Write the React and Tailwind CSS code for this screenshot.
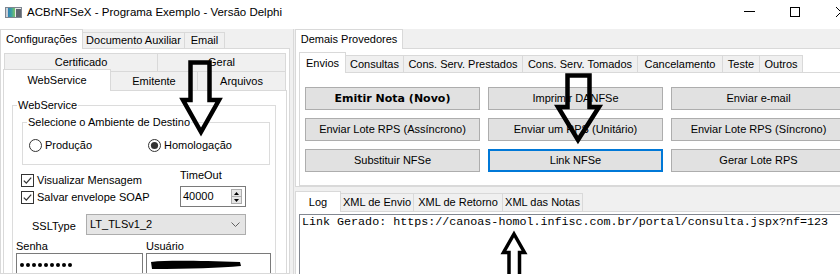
import React from "react";

function Check() {
  return (
    <svg width="13" height="13" viewBox="0 0 13 13" className="shrink-0">
      <rect x="0.5" y="0.5" width="12" height="12" fill="#fff" stroke="#333" />
      <path d="M2.8 6.6 L5.3 9.1 L10.2 3.6" fill="none" stroke="#333" strokeWidth="1.3" />
    </svg>
  );
}

function Radio({ on }) {
  return (
    <svg width="13" height="13" viewBox="0 0 13 13" className="shrink-0">
      <circle cx="6.5" cy="6.5" r="6" fill="#fff" stroke="#333" />
      {on && <circle cx="6.5" cy="6.5" r="3.6" fill="#333" />}
    </svg>
  );
}

function Btn({ children, bold, focus }) {
  return (
    <div
      className={
        "flex items-center justify-center bg-[#e1e1e1] " +
        (focus ? "border-2 border-[#0078d7] " : "border border-[#adadad] ") +
        (bold ? "font-['DejaVu_Sans',Verdana,sans-serif] font-bold" : "")
      }
    >
      {children}
    </div>
  );
}

export default function App() {
  return (
    <div className="relative w-[840px] h-[274px] overflow-hidden bg-[#f0f0f0] text-black font-['Liberation_Sans',Arial,sans-serif] text-[11px] leading-[13px]">
      <div className="w-[864px]">
        {/* Title bar */}
        <div className="h-[29px] bg-white">
          <div className="h-[24px] flex items-center">
            <svg width="17" height="11" viewBox="0 0 17 11" className="ml-[5px] shrink-0">
              <defs>
                <linearGradient id="ig" x1="0" y1="0" x2="1" y2="0">
                  <stop offset="0" stopColor="#2f7fb8" />
                  <stop offset="0.5" stopColor="#3fa3a0" />
                  <stop offset="1" stopColor="#7cc36a" />
                </linearGradient>
              </defs>
              <rect x="0.5" y="0.5" width="16" height="10" fill="#e8e8e8" stroke="#7d8590" />
              <rect x="1" y="1" width="2" height="9" fill="#c9ced6" />
              <rect x="3" y="1" width="7" height="9" fill="url(#ig)" />
              <rect x="11" y="2" width="5" height="8" fill="#5f6670" />
            </svg>
            <span className="ml-[5px] text-[11.5px]">ACBrNFSeX - Programa Exemplo - Versão Delphi</span>
            <div className="ml-auto flex h-full">
              <div className="w-[46px] flex items-center justify-center">
                <svg width="11" height="10" viewBox="0 0 11 10">
                  <line x1="0" y1="4.5" x2="11" y2="4.5" stroke="#000" strokeWidth="1" />
                </svg>
              </div>
              <div className="w-[46px] flex items-center justify-center">
                <svg width="10" height="10" viewBox="0 0 10 10">
                  <rect x="0.5" y="0.5" width="9" height="9" fill="none" stroke="#000" />
                </svg>
              </div>
              <div className="w-[46px] flex items-center justify-center">
                <svg width="10" height="10" viewBox="0 0 10 10">
                  <path d="M0 0 L10 10 M10 0 L0 10" stroke="#000" strokeWidth="1" />
                </svg>
              </div>
            </div>
          </div>
        </div>

        {/* Body */}
        <div className="flex h-[245px] overflow-hidden">
          {/* Left pane */}
          <div className="w-[290px] flex flex-col">
            <div className="h-[19px] flex items-end">
              <div className="relative z-10 -mb-px h-[20px] w-[83px] bg-white border border-b-0 border-[#d9d9d9] flex items-center justify-center">
                Configurações
              </div>
              <div className="-ml-px h-[16px] w-[103px] bg-[#f0f0f0] border border-b-0 border-[#d9d9d9] flex items-center justify-center">
                Documento Auxiliar
              </div>
              <div className="-ml-px h-[16px] w-[41px] bg-[#f0f0f0] border border-b-0 border-[#d9d9d9] flex items-center justify-center">
                Email
              </div>
            </div>
            <div className="flex-1 min-h-0 overflow-hidden border border-[#d9d9d9] bg-white pl-[2px] pt-[4px]">
              <div className="ml-px flex h-[18px]">
                <div className="h-full w-[154px] bg-[#f0f0f0] border border-b-0 border-[#d9d9d9] flex items-center justify-center">
                  Certificado
                </div>
                <div className="-ml-px h-full w-[129px] bg-[#f0f0f0] border border-b-0 border-[#d9d9d9] flex items-center justify-center">
                  Geral
                </div>
              </div>
              <div className="flex h-[19px] items-end">
                <div className="relative z-10 -mb-px h-[22px] w-[108px] bg-white border border-b-0 border-[#d9d9d9] flex items-center justify-center">
                  WebService
                </div>
                <div className="-ml-px h-[19px] w-[88px] bg-[#f0f0f0] border border-b-0 border-[#d9d9d9] flex items-center justify-center">
                  Emitente
                </div>
                <div className="-ml-px h-[19px] w-[89px] bg-[#f0f0f0] border border-b-0 border-[#d9d9d9] flex items-center justify-center">
                  Arquivos
                </div>
              </div>
              <div className="w-[284px] h-[300px] border border-[#d9d9d9] bg-white pl-[8px] pt-[8px]">
                <fieldset className="w-[264px] border border-[#dcdcdc] pb-[10px]">
                  <legend className="ml-[4px] px-px leading-[13px]">WebService</legend>
                  <fieldset className="ml-[9px] mt-[4px] w-[248px] border border-[#dcdcdc] pb-[12px]">
                    <legend className="ml-[4px] px-px leading-[13px]">Selecione o Ambiente de Destino</legend>
                    <div className="mt-[10px] flex items-center h-[13px] pl-[6px]">
                      <div className="w-[119px] flex items-center gap-[3px]">
                        <Radio />
                        <span>Produção</span>
                      </div>
                      <div className="flex items-center gap-[3px]">
                        <Radio on />
                        <span>Homologação</span>
                      </div>
                    </div>
                  </fieldset>
                  <div className="flex">
                    <div className="ml-[8px] w-[159px] mt-[7px] flex flex-col">
                      <div className="h-[17px] flex items-center gap-[3px]">
                        <Check />
                        <span>Visualizar Mensagem</span>
                      </div>
                      <div className="h-[17px] flex items-center gap-[3px]">
                        <Check />
                        <span>Salvar envelope SOAP</span>
                      </div>
                    </div>
                    <div className="mt-[4px] flex flex-col">
                      <div>TimeOut</div>
                      <div className="mt-[4px] w-[66px] h-[21px] border border-[#7a7a7a] bg-white flex items-center pl-[2px]">
                        <span>40000</span>
                        <div className="ml-auto mr-[3px] flex flex-col">
                          <div className="w-[11px] h-[8px] border border-[#adadad] bg-[#e5e5e5] flex items-center justify-center">
                            <svg width="5" height="3" viewBox="0 0 5 3">
                              <path d="M0 3 L2.5 0 L5 3 Z" fill="#000" />
                            </svg>
                          </div>
                          <div className="-mt-px w-[11px] h-[8px] border border-[#adadad] bg-[#e5e5e5] flex items-center justify-center">
                            <svg width="5" height="3" viewBox="0 0 5 3">
                              <path d="M0 0 L2.5 3 L5 0 Z" fill="#000" />
                            </svg>
                          </div>
                        </div>
                      </div>
                    </div>
                  </div>
                  <div className="flex mt-[7px]">
                    <div className="ml-[19px] w-[54px] pt-[6px]">SSLType</div>
                    <div className="w-[160px] h-[21px] border border-[#adadad] bg-[#e5e5e5] flex items-center pl-[3px]">
                      <span>LT_TLSv1_2</span>
                      <svg width="9" height="5" viewBox="0 0 9 5" className="ml-auto mr-[5px]">
                        <path d="M0.5 0.5 L4.5 4.5 L8.5 0.5" fill="none" stroke="#606060" strokeWidth="1" />
                      </svg>
                    </div>
                  </div>
                  <div className="mt-[5px] ml-[3px] flex gap-[3px]">
                    <div className="w-[127px]">
                      <div>Senha</div>
                      <div className="h-[21px] border border-[#7a7a7a] bg-white flex items-center pl-[3px] gap-[2px] pt-[2px]">
                        {[0, 1, 2, 3, 4, 5, 6, 7, 8].map((i) => (
                          <span key={i} className="w-[4px] h-[4px] rounded-full bg-black" />
                        ))}
                      </div>
                    </div>
                    <div className="w-[125px]">
                      <div>Usuário</div>
                      <div className="h-[21px] border border-[#7a7a7a] bg-white flex items-center pl-[3px] pt-[2px]">
                        <svg width="92" height="10" viewBox="0 0 92 10">
                          <path
                            d="M1 2 C20 0 50 1 90 2 L91 6 C70 8 40 9 2 9 Z"
                            fill="#000"
                          />
                        </svg>
                      </div>
                    </div>
                  </div>
                </fieldset>
              </div>
            </div>
          </div>

          <div className="w-[3px]" />

          {/* Right pane */}
          <div className="flex-1 flex flex-col border-l border-[#d9d9d9] pl-px">
            <div className="h-[19px] flex items-end">
              <div className="relative z-10 -mb-px h-[20px] w-[108px] bg-white border border-b-0 border-[#d9d9d9] flex items-center justify-center">
                Demais Provedores
              </div>
            </div>
            <div className="h-[140px] border border-[#d9d9d9] bg-white pl-[3px] pt-[3px]">
              <div className="h-[20px] flex items-end">
                <div className="relative z-10 -mb-px h-[21px] w-[47px] bg-white border border-b-0 border-[#d9d9d9] flex items-center justify-center">
                  Envios
                </div>
                <div className="-ml-px h-[17px] w-[59px] bg-[#f0f0f0] border border-b-0 border-[#d9d9d9] flex items-center justify-center">
                  Consultas
                </div>
                <div className="-ml-px h-[17px] w-[120px] bg-[#f0f0f0] border border-b-0 border-[#d9d9d9] flex items-center justify-center">
                  Cons. Serv. Prestados
                </div>
                <div className="-ml-px h-[17px] w-[116px] bg-[#f0f0f0] border border-b-0 border-[#d9d9d9] flex items-center justify-center">
                  Cons. Serv. Tomados
                </div>
                <div className="-ml-px h-[17px] w-[86px] bg-[#f0f0f0] border border-b-0 border-[#d9d9d9] flex items-center justify-center">
                  Cancelamento
                </div>
                <div className="-ml-px h-[17px] w-[38px] bg-[#f0f0f0] border border-b-0 border-[#d9d9d9] flex items-center justify-center">
                  Teste
                </div>
                <div className="-ml-px h-[17px] w-[44px] bg-[#f0f0f0] border border-b-0 border-[#d9d9d9] flex items-center justify-center">
                  Outros
                </div>
              </div>
              <div className="h-[114px] border border-[#d9d9d9] bg-white pl-[5px] pt-[14px]">
                <div className="grid grid-cols-[175px_175px_175px] auto-rows-[23px] gap-[8px]">
                  <Btn bold>Emitir Nota (Novo)</Btn>
                  <Btn>Imprimir DANFSe</Btn>
                  <Btn>Enviar e-mail</Btn>
                  <Btn>Enviar Lote RPS (Assíncrono)</Btn>
                  <Btn>Enviar um RPS (Unitário)</Btn>
                  <Btn>Enviar Lote RPS (Síncrono)</Btn>
                  <Btn>Substituir NFSe</Btn>
                  <Btn focus>Link NFSe</Btn>
                  <Btn>Gerar Lote RPS</Btn>
                </div>
              </div>
            </div>
            <div className="mt-[4px] h-[20px] flex items-end">
              <div className="relative z-10 -mb-px h-[21px] w-[46px] bg-white border border-b-0 border-[#d9d9d9] flex items-center justify-center">
                Log
              </div>
              <div className="-ml-px h-[18px] w-[74px] bg-[#f0f0f0] border border-b-0 border-[#d9d9d9] flex items-center justify-center">
                XML de Envio
              </div>
              <div className="-ml-px h-[18px] w-[90px] bg-[#f0f0f0] border border-b-0 border-[#d9d9d9] flex items-center justify-center">
                XML de Retorno
              </div>
              <div className="-ml-px h-[18px] w-[81px] bg-[#f0f0f0] border border-b-0 border-[#d9d9d9] flex items-center justify-center">
                XML das Notas
              </div>
            </div>
            <div className="flex-1 border border-[#d9d9d9] bg-white pl-[3px] pt-[2px]">
              <div className="h-[80px] border border-[#828790] bg-white pl-[2px] pt-[1px] font-['Liberation_Mono','Courier_New',monospace] text-[11.7px] leading-[13px] whitespace-nowrap">
                Link Gerado: https://canoas-homol.infisc.com.br/portal/consulta.jspx?nf=123
              </div>
            </div>
          </div>
        </div>
      </div>

      {/* Hand-drawn arrows overlay */}
      <svg className="absolute left-0 top-0 pointer-events-none" width="840" height="274" viewBox="0 0 840 274">
        <polygon
          points="190.5,62.5 209.5,62.5 209.5,100 219,100 201,132 183,100 190.5,100"
          fill="none"
          stroke="#000"
          strokeWidth="4.5"
          strokeLinejoin="miter"
        />
        <polygon
          points="567.5,75.5 589.5,75.5 589.5,107 599,107 578,140 558,107 567.5,107"
          fill="none"
          stroke="#000"
          strokeWidth="4.5"
          strokeLinejoin="miter"
        />
        <polygon
          points="514,234 524.5,252.5 519.5,252.5 519.5,280 509,280 509,252.5 503.5,252.5"
          fill="#fff"
          stroke="#000"
          strokeWidth="3.5"
          strokeLinejoin="miter"
        />
      </svg>
    </div>
  );
}
